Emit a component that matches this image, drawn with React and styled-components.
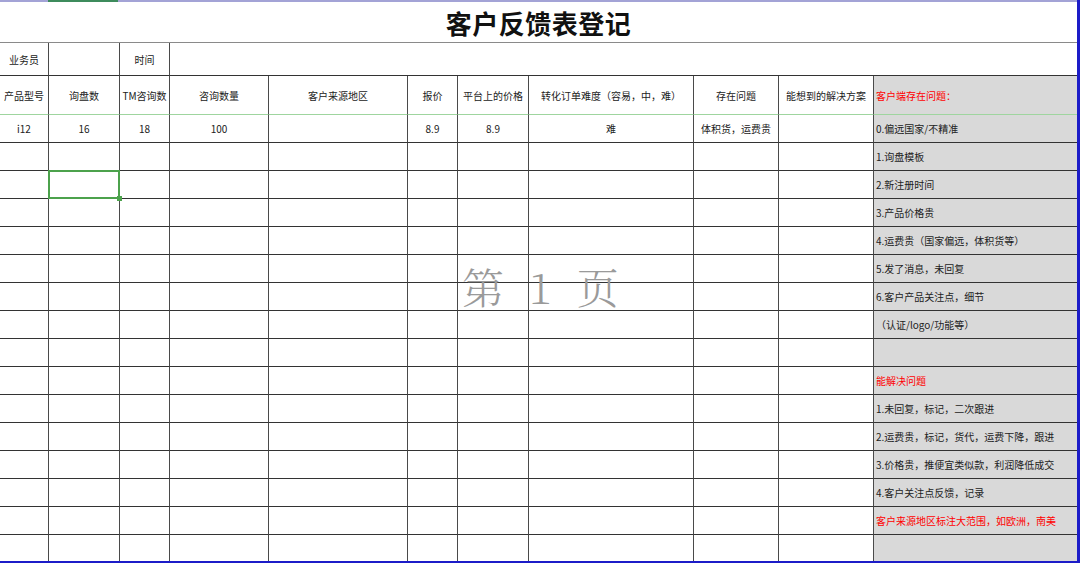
import React from "react";
import styled, { createGlobalStyle, css } from "styled-components";

const GlobalStyle = createGlobalStyle`
  html, body { margin: 0; padding: 0; background: #fff; }
  body { font-family: "Noto Sans CJK SC", "Noto Sans", sans-serif; }
`;

const COLS = [49, 71, 50, 99, 139, 50, 71, 165, 85, 95, 203];

const Page = styled.div`
  position: relative;
  width: 1080px;
  height: 563px;
  box-sizing: border-box;
  border-right: 3px solid #1c1cc8;
  border-bottom: 2px solid #1c1cc8;
  overflow: hidden;
  background: #fff;
`;

const TopStrip = styled.div`
  display: flex;
  height: 2px;
  background: #a3a3d6;
`;

const StripSegment = styled.div`
  width: ${(p) => p.$w}px;
  background: ${(p) => (p.$active ? "#3d8b5c" : "#a3a3d6")};
`;

const Sheet = styled.div`
  display: grid;
  grid-template-columns: ${COLS.map((c) => c + "px").join(" ")};
  grid-template-rows: 41px 33px 39px repeat(16, 28px);
`;

const Title = styled.div`
  grid-column: 1 / -1;
  display: flex;
  align-items: center;
  justify-content: center;
  border-bottom: 1px solid #8a8a8a;
  font-size: 26px;
  font-weight: 700;
  color: #111;
  letter-spacing: 0.5px;
`;

const Cell = styled.div`
  position: relative;
  box-sizing: border-box;
  display: flex;
  align-items: center;
  justify-content: ${(p) => (p.$left ? "flex-start" : "center")};
  padding: ${(p) => (p.$left ? "0 0 0 2px" : "0")};
  border-right: ${(p) => (p.$last ? "none" : "1px solid #4a4a4a")};
  border-bottom: 1px solid ${(p) => (p.$freeze ? "#9fd59f" : "#333")};
  background: ${(p) => (p.$shade ? "#d9d9d9" : "#fff")};
  color: ${(p) => (p.$red ? "#f00" : "#222")};
  font-size: 10px;
  white-space: nowrap;
  overflow: visible;
  grid-column: ${(p) => p.$span || "auto"};
  ${(p) =>
    p.$selected &&
    css`
      &::after {
        content: "";
        position: absolute;
        left: -1px;
        top: -1px;
        right: -1px;
        bottom: -1px;
        border: 2px solid #4ca24c;
        pointer-events: none;
      }
      &::before {
        content: "";
        position: absolute;
        right: -3px;
        bottom: -3px;
        width: 5px;
        height: 5px;
        background: #4ca24c;
        z-index: 2;
      }
    `}
`;

const Watermark = styled.div`
  position: absolute;
  left: 462px;
  top: 256px;
  display: flex;
  align-items: baseline;
  gap: 25px;
  font-family: "Noto Serif CJK SC", "Liberation Serif", "Noto Sans CJK SC", serif;
  font-size: 42px;
  font-weight: 300;
  color: #9a9a9a;
  white-space: pre;
  pointer-events: none;
`;

const HEADERS = [
  "产品型号",
  "询盘数",
  "TM咨询数",
  "咨询数量",
  "客户来源地区",
  "报价",
  "平台上的价格",
  "转化订单难度（容易，中，难）",
  "存在问题",
  "能想到的解决方案",
];

const NOTES = [
  { t: "0.偏远国家/不精准" },
  { t: "1.询盘模板" },
  { t: "2.新注册时间" },
  { t: "3.产品价格贵" },
  { t: "4.运费贵（国家偏远，体积货等）" },
  { t: "5.发了消息，未回复" },
  { t: "6.客户产品关注点，细节" },
  { t: "（认证/logo/功能等）" },
  { t: "" },
  { t: "能解决问题", red: true },
  { t: "1.未回复，标记，二次跟进" },
  { t: "2.运费贵，标记，货代，运费下降，跟进" },
  { t: "3.价格贵，推便宜类似款，利润降低成交" },
  { t: "4.客户关注点反馈，记录" },
  { t: "客户来源地区标注大范围，如欧洲，南美", red: true },
  { t: "" },
];

const FIRST_ROW = ["i12", "16", "18", "100", "", "8.9", "8.9", "难", "体积货，运费贵", ""];

export default function App() {
  return (
    <>
      <GlobalStyle />
      <Page>
        <TopStrip>
          <StripSegment $w={48} />
          <StripSegment $w={70} $active />
        </TopStrip>
        <Sheet>
          <Title>客户反馈表登记</Title>

          <Cell>业务员</Cell>
          <Cell />
          <Cell>时间</Cell>
          <Cell $span="4 / -1" $last />

          {HEADERS.map((h) => (
            <Cell key={h} $freeze>
              {h}
            </Cell>
          ))}
          <Cell $freeze $shade $left $red $last>
            客户端存在问题：
          </Cell>

          {NOTES.map((note, r) =>
            [
              ...Array.from({ length: 10 }, (_, c) => (
                <Cell key={`${r}-${c}`} $selected={r === 2 && c === 1}>
                  {r === 0 ? FIRST_ROW[c] : ""}
                </Cell>
              )),
              <Cell key={`${r}-n`} $shade $left $last $red={note.red}>
                {note.t}
              </Cell>,
            ]
          )}
        </Sheet>
        <Watermark>
          <span>第</span>
          <span>1</span>
          <span>页</span>
        </Watermark>
      </Page>
    </>
  );
}
